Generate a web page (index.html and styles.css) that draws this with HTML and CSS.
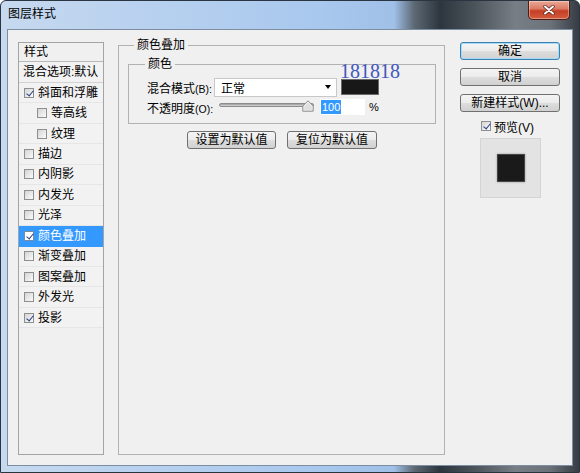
FILE: index.html
```html
<!DOCTYPE html>
<html lang="zh-CN">
<head>
<meta charset="utf-8">
<title>图层样式</title>
<link rel="stylesheet" href="styles.css">
</head>
<body>
<div class="window">
  <div class="titlebar">
    <span class="title">图层样式</span>
    <div class="close">
      <svg width="12" height="10" viewBox="0 0 12 10">
        <path d="M2 1.5 L10 8.5 M10 1.5 L2 8.5" stroke="#5a2a20" stroke-width="3.4" stroke-linecap="round" fill="none"/>
        <path d="M2 1.5 L10 8.5 M10 1.5 L2 8.5" stroke="#ffffff" stroke-width="1.9" stroke-linecap="round" fill="none"/>
      </svg>
    </div>
  </div>
  <div class="client">
    <div class="list">
      <div class="list-head">样式</div>
      <div class="row plain">混合选项:默认</div>
      <div class="row"><span class="cb on"></span>斜面和浮雕</div>
      <div class="row sub"><span class="cb"></span>等高线</div>
      <div class="row sub"><span class="cb"></span>纹理</div>
      <div class="row"><span class="cb"></span>描边</div>
      <div class="row"><span class="cb"></span>内阴影</div>
      <div class="row"><span class="cb"></span>内发光</div>
      <div class="row"><span class="cb"></span>光泽</div>
      <div class="row active"><span class="cb on"></span>颜色叠加</div>
      <div class="row"><span class="cb"></span>渐变叠加</div>
      <div class="row"><span class="cb"></span>图案叠加</div>
      <div class="row"><span class="cb"></span>外发光</div>
      <div class="row"><span class="cb on"></span>投影</div>
    </div>

    <fieldset class="group">
      <legend>颜色叠加</legend>
      <fieldset class="inner">
        <legend>颜色</legend>
        <div class="field">
          <span class="label">混合模式<span class="lat">(B):</span></span>
          <div class="select"><span>正常</span><span class="arrow"></span></div>
          <div class="swatch"><span class="note">181818</span></div>
        </div>
        <div class="field">
          <span class="label">不透明度<span class="lat">(O):</span></span>
          <div class="slider">
            <div class="track"></div>
            <svg class="thumb" width="12" height="12" viewBox="0 0 12 12">
              <path d="M6 0.8 L11.2 6 L11.2 11.2 L0.8 11.2 L0.8 6 Z" fill="#f2f2f2" stroke="#8a8a8a" stroke-width="1"/>
              <path d="M6 2.4 L9.8 6.3 L9.8 10 L2.2 10 L2.2 6.3 Z" fill="#e0e0e0"/>
            </svg>
          </div>
          <div class="num"><span class="sel">100</span></div>
          <span class="pct">%</span>
        </div>
      </fieldset>
      <div class="btnrow">
        <button class="btn w89">设置为默认值</button>
        <button class="btn w90">复位为默认值</button>
      </div>
    </fieldset>

    <div class="side">
      <button class="btn default">确定</button>
      <button class="btn">取消</button>
      <button class="btn">新建样式(W)...</button>
      <div class="preview-row"><span class="cb on"></span><span>预览(V)</span></div>
      <div class="preview"><div class="square"></div></div>
    </div>
  </div>
</div>
</body>
</html>
```

FILE: styles.css
```css
* { box-sizing: border-box; }
html, body { margin: 0; padding: 0; }
body {
  width: 580px;
  height: 473px;
  overflow: hidden;
  background: #ffffff;
  font-family: "Liberation Sans", "Noto Sans CJK SC", sans-serif;
  font-size: 12px;
  color: #000;
}

.window {
  width: 580px;
  height: 473px;
  display: flex;
  flex-direction: column;
  border: 1px solid #2a3541;
  border-radius: 6px 6px 0 0;
  padding: 0 6px 6px 6px;
  background: linear-gradient(90deg,
    #c6d9ef 0%, #b8d1ef 25%, #a9c8ee 55%, #a0c0e8 68%,
    #5c6873 71.5%, #2d363e 76%, #4b535b 82%, #777e86 89%,
    #6b7279 95%, #353b42 100%);
}

.titlebar {
  height: 28px;
  display: flex;
  justify-content: space-between;
  align-items: flex-start;
  padding-left: 1px;
}
.title {
  line-height: 27px;
  font-size: 12px;
  color: #000;
}
.close {
  width: 42px;
  height: 19px;
  margin-right: 3px;
  border: 1px solid #4e1d14;
  border-top: none;
  border-radius: 0 0 5px 5px;
  background: linear-gradient(#eaa896 0%, #dc7c66 42%, #c53f25 55%, #d35c3e 100%);
  box-shadow: inset 0 0 0 1px rgba(255, 255, 255, 0.35);
  display: flex;
  align-items: center;
  justify-content: center;
}

.client {
  flex: 1;
  display: flex;
  align-items: flex-start;
  background: #f0f0f0;
  border: 1px solid #7d8ea2;
  padding: 8px 0 0 10px;
}

/* left style list */
.list {
  width: 86px;
  height: 413px;
  margin-top: 4px;
  border: 1px solid #a4a4a4;
  background: #f0f0f0;
  flex: none;
}
.list-head {
  height: 19px;
  line-height: 18px;
  padding-left: 5px;
  border-bottom: 1px solid #b8b8b8;
}
.row {
  height: 20.45px;
  display: flex;
  align-items: center;
  gap: 4px;
  padding-left: 5px;
  border-bottom: 1px solid #e6e6e6;
  background: #f2f2f2;
  white-space: nowrap;
  overflow: hidden;
  line-height: 14px;
}
.row.plain {
  height: 21px;
  padding-left: 4px;
  border-bottom-color: #d2d2d2;
}
.row.sub { padding-left: 18px; }
.row.active {
  background: #3399ff;
  color: #ffffff;
  border-bottom-color: #3399ff;
}

.cb {
  width: 10px;
  height: 10px;
  flex: none;
  position: relative;
  border: 1px solid #8e8f8f;
  background: linear-gradient(135deg, #d4d4d4, #fbfbfb);
}
.row.active .cb { background: #ffffff; border-color: #7a8aa0; }
.cb.on::after {
  content: "";
  position: absolute;
  left: 2.5px;
  top: 0px;
  width: 3px;
  height: 6px;
  border: solid #263f86;
  border-width: 0 1.6px 1.6px 0;
  transform: rotate(40deg);
}

/* middle group */
.group {
  margin: 0 0 0 14px;
  padding: 5px 8px 0 9px;
  width: 327px;
  height: 417px;
  min-width: 0;
  border: 1px solid #b2b2b2;
  flex: none;
}
.group > legend {
  margin-left: 6px;
  padding: 0 3px;
  line-height: 14px;
}
.inner {
  margin: 0;
  padding: 6px 6px 6px 18px;
  height: 67px;
  min-width: 0;
  border: 1px solid #b2b2b2;
}
.inner > legend {
  margin-left: -2px;
  padding: 0 3px;
  line-height: 14px;
}

.field {
  height: 20px;
  display: flex;
  align-items: center;
}
.label {
  width: 67px;
  flex: none;
  white-space: nowrap;
  font-size: 12px;
}
.lat { font-size: 10.5px; }
.select {
  width: 123px;
  height: 19px;
  flex: none;
  background: #ffffff;
  border: 1px solid #c8c8c8;
  display: flex;
  align-items: center;
  justify-content: space-between;
  padding: 0 5px 0 6px;
}
.arrow {
  width: 0;
  height: 0;
  border-left: 3.5px solid transparent;
  border-right: 3.5px solid transparent;
  border-top: 4px solid #000;
}
.swatch {
  width: 38px;
  height: 16px;
  margin-left: 4px;
  flex: none;
  position: relative;
  background: #181818;
  border: 1px solid #6a6a6a;
}
.note {
  position: absolute;
  left: -2px;
  top: -19px;
  font-family: "Liberation Serif", serif;
  font-size: 20px;
  line-height: 20px;
  color: #4256bd;
  white-space: nowrap;
}

.slider {
  width: 95px;
  height: 20px;
  margin-left: 5px;
  flex: none;
  position: relative;
}
.track {
  position: absolute;
  left: 0;
  right: 0;
  top: 6px;
  height: 4px;
  border-radius: 2px;
  border: 1px solid #8c8c8c;
  background: linear-gradient(#9a9a9a, #dadada);
}
.thumb {
  position: absolute;
  left: 83px;
  top: 3px;
}
.num {
  width: 45px;
  height: 16px;
  margin-left: 6px;
  flex: none;
  background: #ffffff;
  display: flex;
  align-items: center;
  padding-left: 1px;
}
.sel {
  background: #3399ff;
  color: #ffffff;
  font-size: 11px;
  line-height: 14px;
  padding: 0 1px;
}
.pct {
  margin-left: 4px;
  font-size: 11px;
}

.btnrow {
  display: flex;
  justify-content: center;
  gap: 11px;
  margin-top: 7px;
}
.btn {
  height: 18px;
  padding: 0;
  border: 1px solid #707070;
  border-radius: 3px;
  background: linear-gradient(#f4f4f4 0%, #ececec 48%, #dddddd 52%, #d1d1d1 100%);
  font: inherit;
  font-size: 12px;
  line-height: 16px;
  color: #000;
  white-space: nowrap;
}
.w89 { width: 89px; }
.w90 { width: 90px; }

/* right column */
.side {
  width: 100px;
  margin: 4px 0 0 15px;
  display: flex;
  flex-direction: column;
  flex: none;
}
.side .btn {
  width: 100px;
  margin-bottom: 8px;
}
.btn.default {
  border-color: #3c7fb1;
  box-shadow: inset 0 0 0 1px #a3dcf4;
}
.preview-row {
  height: 16px;
  margin-top: -2px;
  display: flex;
  align-items: center;
  gap: 3px;
  padding-left: 21px;
  white-space: nowrap;
}
.preview {
  width: 61px;
  height: 60px;
  margin: 4px 0 0 20px;
  background: #e3e3e3;
  border: 1px solid #d4d4d4;
  display: flex;
  align-items: center;
  justify-content: center;
}
.square {
  width: 28px;
  height: 28px;
  background: #1a1a1a;
  border: 1px solid #444;
  box-shadow: 0 0 2px rgba(0, 0, 0, 0.35);
}
```
